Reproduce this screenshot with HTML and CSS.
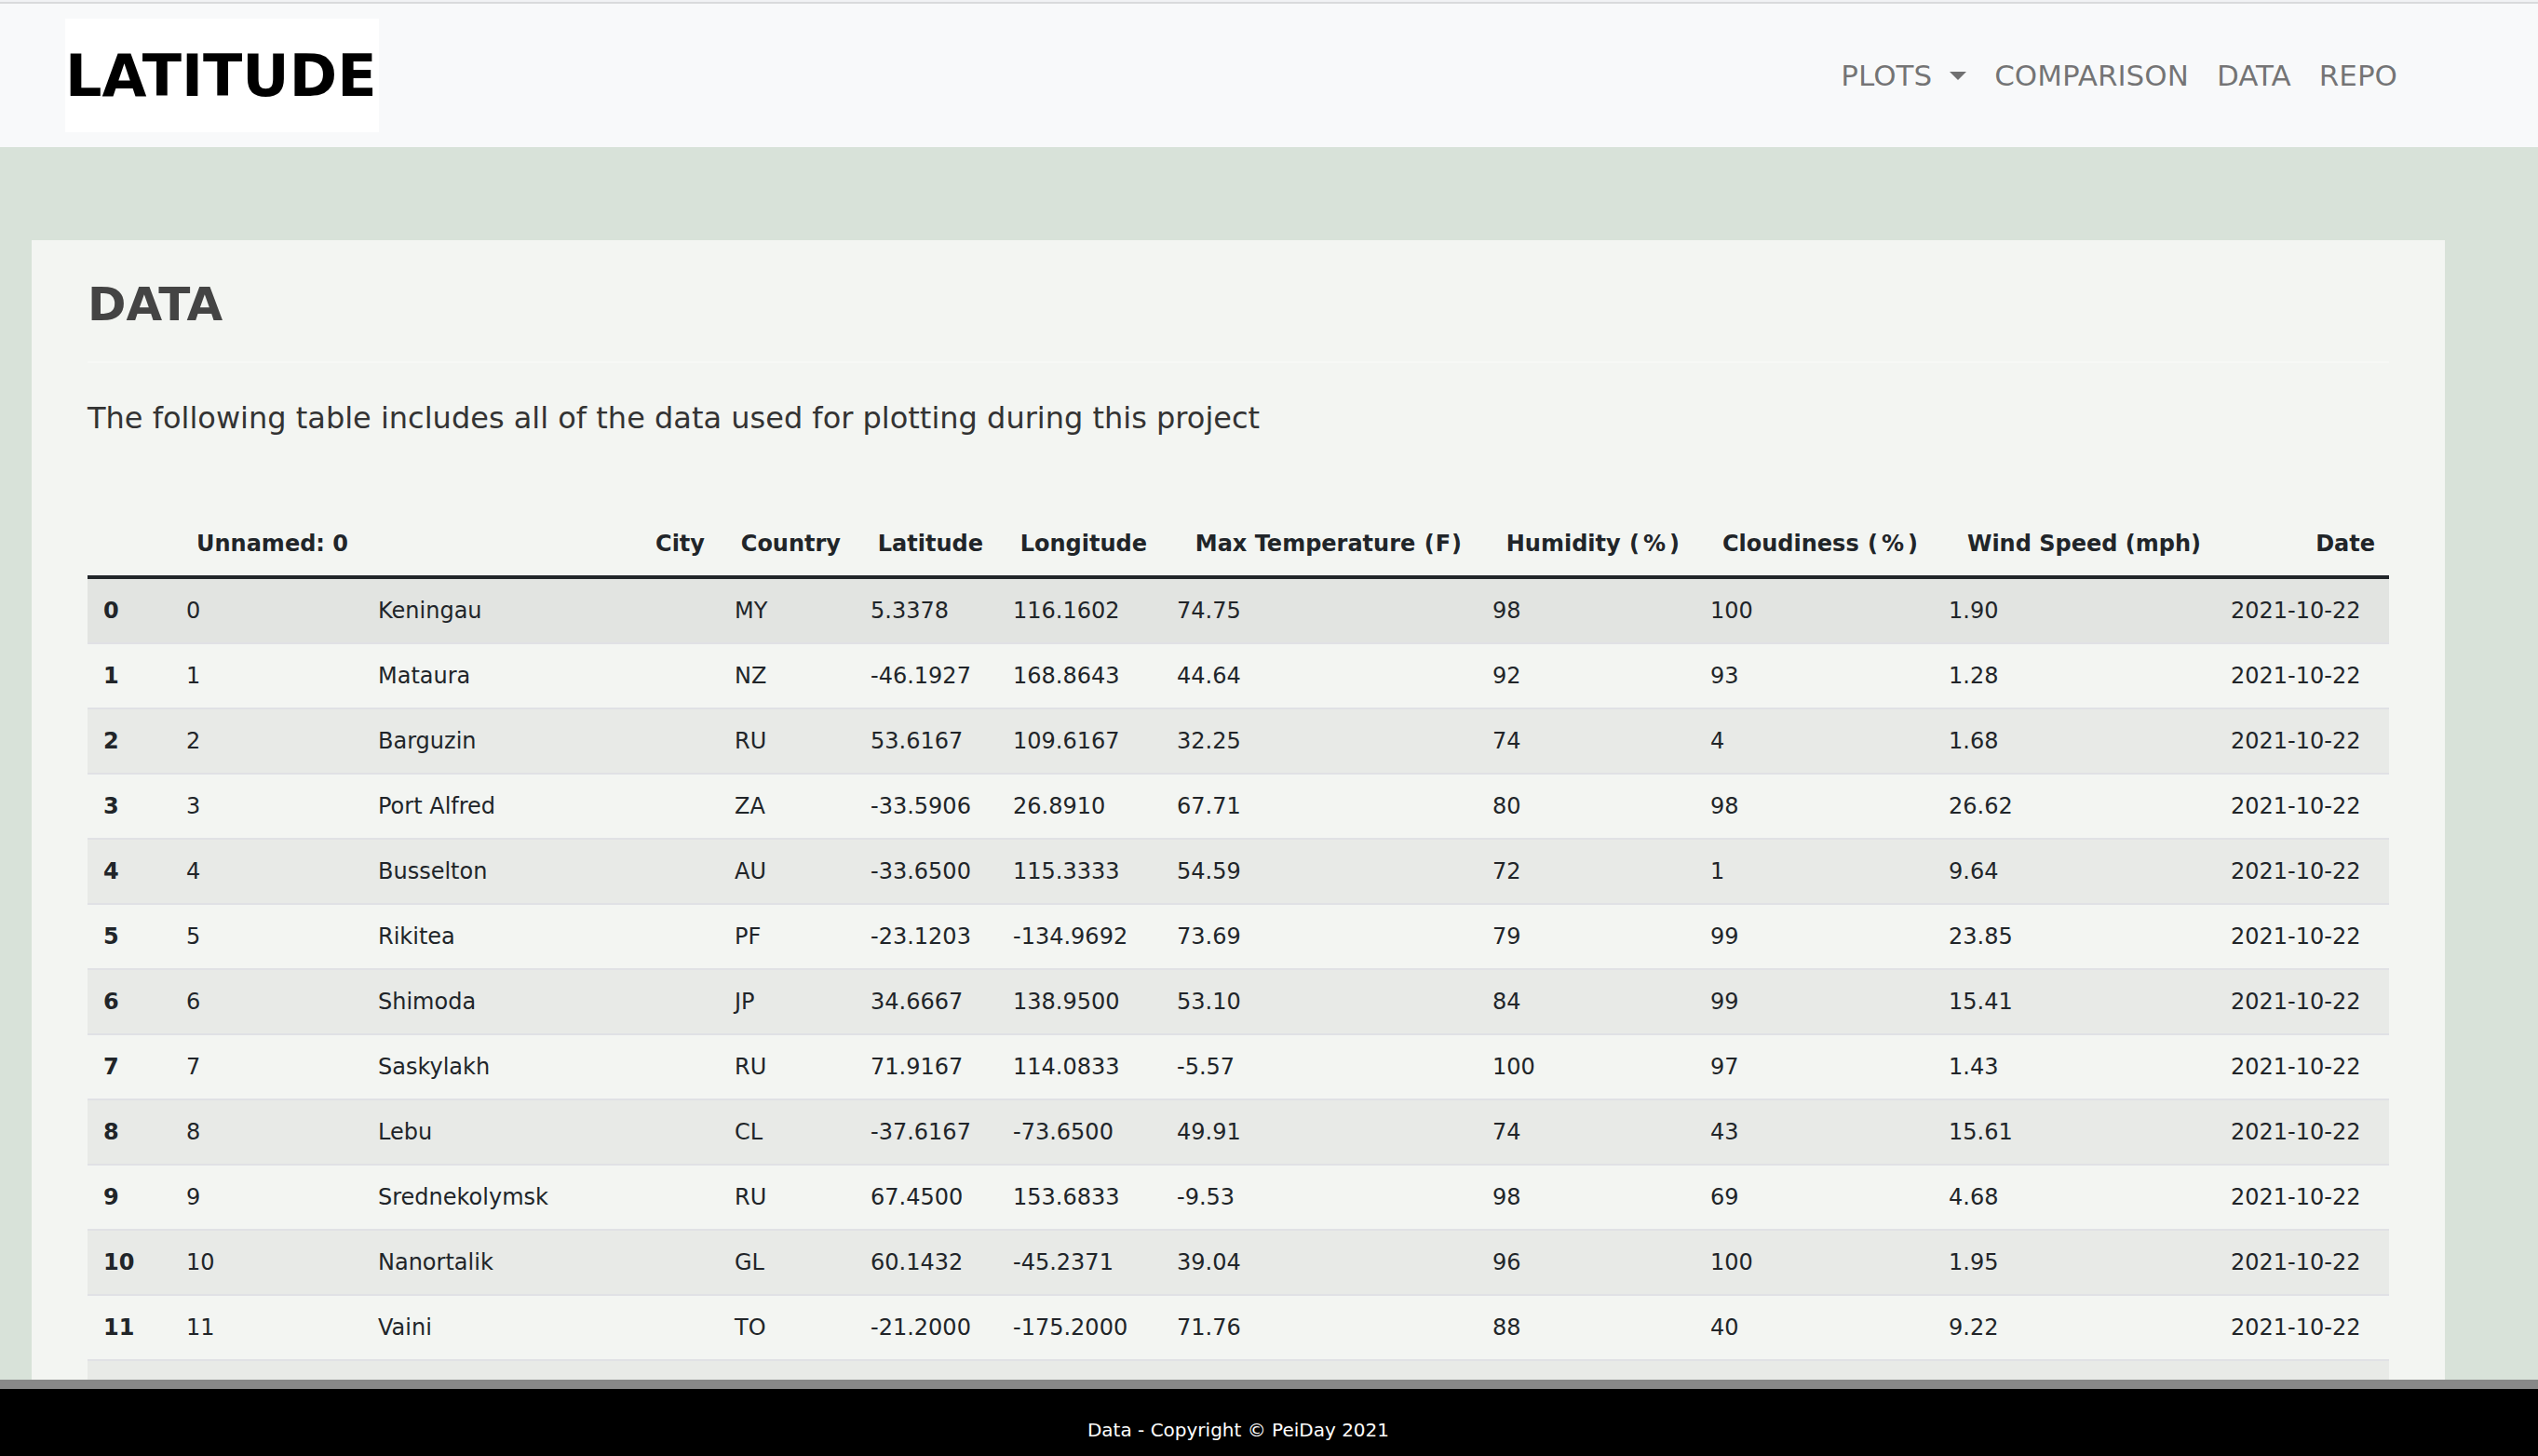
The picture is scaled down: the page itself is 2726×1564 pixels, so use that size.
FILE: index.html
```html
<!DOCTYPE html>
<html lang="en">
<head>
<meta charset="utf-8">
<title>Latitude - Data</title>
<link rel="stylesheet" href="styles.css">
</head>
<body>
<header class="site-header">
  <nav class="navbar">
    <a class="brand" href="#">LATITUDE</a>
    <ul class="nav">
      <li class="nav-item"><a class="nav-link" href="#">PLOTS<span class="caret"></span></a></li>
      <li class="nav-item"><a class="nav-link" href="#">COMPARISON</a></li>
      <li class="nav-item"><a class="nav-link" href="#">DATA</a></li>
      <li class="nav-item"><a class="nav-link" href="#">REPO</a></li>
    </ul>
  </nav>
</header>
<main class="main">
  <section class="card">
    <h1 class="title">DATA</h1>
    <hr class="rule">
    <p class="lead">The following table includes all of the data used for plotting during this project</p>
    <table class="data-table">
      <colgroup>
        <col class="c0"><col class="c1"><col class="c2"><col class="c3"><col class="c4"><col class="c5"><col class="c6"><col class="c7"><col class="c8"><col class="c9"><col class="c10">
      </colgroup>
      <thead>
        <tr>
          <th></th><th>Unnamed: 0</th><th>City</th><th>Country</th><th>Latitude</th><th>Longitude</th><th>Max Temperature <span class="par">(</span>F<span class="par">)</span></th><th>Humidity <span class="par">(</span><span class="pct">%</span><span class="par">)</span></th><th>Cloudiness <span class="par">(</span><span class="pct">%</span><span class="par">)</span></th><th>Wind Speed (mph)</th><th>Date</th>
        </tr>
      </thead>
      <tbody>
        <tr class="hover"><th>0</th><td>0</td><td>Keningau</td><td>MY</td><td>5.3378</td><td>116.1602</td><td>74.75</td><td>98</td><td>100</td><td>1.90</td><td>2021-10-22</td></tr>
        <tr><th>1</th><td>1</td><td>Mataura</td><td>NZ</td><td>-46.1927</td><td>168.8643</td><td>44.64</td><td>92</td><td>93</td><td>1.28</td><td>2021-10-22</td></tr>
        <tr><th>2</th><td>2</td><td>Barguzin</td><td>RU</td><td>53.6167</td><td>109.6167</td><td>32.25</td><td>74</td><td>4</td><td>1.68</td><td>2021-10-22</td></tr>
        <tr><th>3</th><td>3</td><td>Port Alfred</td><td>ZA</td><td>-33.5906</td><td>26.8910</td><td>67.71</td><td>80</td><td>98</td><td>26.62</td><td>2021-10-22</td></tr>
        <tr><th>4</th><td>4</td><td>Busselton</td><td>AU</td><td>-33.6500</td><td>115.3333</td><td>54.59</td><td>72</td><td>1</td><td>9.64</td><td>2021-10-22</td></tr>
        <tr><th>5</th><td>5</td><td>Rikitea</td><td>PF</td><td>-23.1203</td><td>-134.9692</td><td>73.69</td><td>79</td><td>99</td><td>23.85</td><td>2021-10-22</td></tr>
        <tr><th>6</th><td>6</td><td>Shimoda</td><td>JP</td><td>34.6667</td><td>138.9500</td><td>53.10</td><td>84</td><td>99</td><td>15.41</td><td>2021-10-22</td></tr>
        <tr><th>7</th><td>7</td><td>Saskylakh</td><td>RU</td><td>71.9167</td><td>114.0833</td><td>-5.57</td><td>100</td><td>97</td><td>1.43</td><td>2021-10-22</td></tr>
        <tr><th>8</th><td>8</td><td>Lebu</td><td>CL</td><td>-37.6167</td><td>-73.6500</td><td>49.91</td><td>74</td><td>43</td><td>15.61</td><td>2021-10-22</td></tr>
        <tr><th>9</th><td>9</td><td>Srednekolymsk</td><td>RU</td><td>67.4500</td><td>153.6833</td><td>-9.53</td><td>98</td><td>69</td><td>4.68</td><td>2021-10-22</td></tr>
        <tr><th>10</th><td>10</td><td>Nanortalik</td><td>GL</td><td>60.1432</td><td>-45.2371</td><td>39.04</td><td>96</td><td>100</td><td>1.95</td><td>2021-10-22</td></tr>
        <tr><th>11</th><td>11</td><td>Vaini</td><td>TO</td><td>-21.2000</td><td>-175.2000</td><td>71.76</td><td>88</td><td>40</td><td>9.22</td><td>2021-10-22</td></tr>
        <tr class="peek"><th></th><td></td><td></td><td></td><td></td><td></td><td></td><td></td><td></td><td></td><td></td></tr>
      </tbody>
    </table>
  </section>
</main>
<footer class="footer">
  <p class="footer-text">Data - Copyright © PeiDay 2021</p>
</footer>
</body>
</html>
```

FILE: styles.css
```css
* { box-sizing: border-box; }

html, body {
  height: 100%;
}

body {
  margin: 0;
  display: flex;
  flex-direction: column;
  overflow: hidden;
  background: #d8e2d9;
  font-family: "DejaVu Sans", Verdana, sans-serif;
  color: #212529;
}

/* ---------- header / navbar ---------- */
.site-header {
  flex: none;
  padding-top: 2px;
  background: #f1f2f4;
}

.navbar {
  height: 156px;
  border-top: 2px solid #d9dadc;
  background: #f8f9fa;
  display: flex;
  align-items: center;
  justify-content: space-between;
  padding: 0 136px 0 70px;
}

.brand {
  display: flex;
  align-items: center;
  height: 122px;
  padding: 2px 2px 0 0;
  background: #ffffff;
  color: #000000;
  text-decoration: none;
  font-weight: bold;
  font-size: 62px;
  line-height: 1;
}

.nav {
  display: flex;
  list-style: none;
  margin: 0;
  padding: 0;
}

.nav-link {
  display: flex;
  align-items: center;
  padding: 0 15px;
  font-size: 31px;
  line-height: 46px;
  color: rgba(0, 0, 0, 0.55);
  text-decoration: none;
}

.caret {
  display: inline-block;
  margin-left: 19px;
  width: 0;
  height: 0;
  border-top: 9px solid rgba(0, 0, 0, 0.55);
  border-left: 9px solid transparent;
  border-right: 9px solid transparent;
}

/* ---------- main ---------- */
.main {
  flex: 1 1 auto;
  min-height: 0;
  overflow: hidden;
  padding: 100px 100px 0 34px;
}

.card {
  background: #f3f5f2;
  padding: 40px 60px 60px 60px;
}

.title {
  margin: 0 0 32px;
  font-size: 50px;
  line-height: 58px;
  font-weight: bold;
  color: #444444;
}

.rule {
  margin: 0 0 35px;
  border: 0;
  height: 2px;
  background: #f7f8f6;
}

.lead {
  margin: 0 0 77px;
  font-size: 32px;
  line-height: 48px;
  color: #333333;
}

/* ---------- table ---------- */
.data-table {
  width: 100%;
  table-layout: fixed;
  border-collapse: collapse;
  font-size: 24px;
  line-height: 36px;
  color: #212529;
}

.c0 { width: 89px; }
.c1 { width: 206px; }
.c2 { width: 383px; }
.c3 { width: 146px; }
.c4 { width: 153px; }
.c5 { width: 176px; }
.c6 { width: 339px; }
.c7 { width: 234px; }
.c8 { width: 256px; }
.c9 { width: 303px; }
.c10 { width: 187px; }

.data-table th,
.data-table td {
  padding: 16px 15px 16px 17px;
  white-space: nowrap;
  overflow: hidden;
}

.data-table thead th {
  text-align: right;
  font-weight: bold;
  vertical-align: bottom;
  padding-right: 15px;
  border-bottom: 4px solid #212529;
}

.par { padding: 0 1px; }
.pct { padding: 0 3px; }

.data-table tbody th,
.data-table tbody td {
  text-align: left;
  border-bottom: 2px solid #e0e1e5;
}

.data-table tbody th {
  font-weight: bold;
}

.data-table tbody tr:nth-child(odd) {
  background: #e8eae7;
}

.data-table tbody tr.hover {
  background: #e2e4e1;
}

.data-table tbody tr.peek th,
.data-table tbody tr.peek td {
  height: 70px;
}

/* ---------- footer ---------- */
.footer {
  flex: none;
  height: 82px;
  border-top: 10px solid #888888;
  background: #000000;
  padding: 29px 66px 0 0;
  text-align: center;
}

.footer-text {
  margin: 0;
  font-size: 20px;
  line-height: 30px;
  color: #ffffff;
}
```
